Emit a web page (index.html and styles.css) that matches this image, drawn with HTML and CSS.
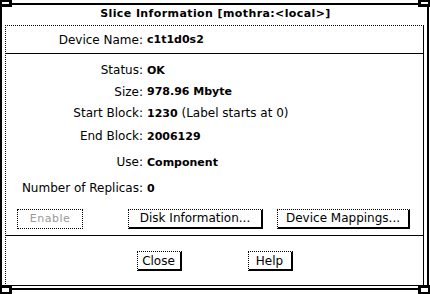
FILE: index.html
```html
<!DOCTYPE html>
<html lang="en">
<head>
  <meta charset="UTF-8" />
  <title>Slice Information</title>
  <link rel="stylesheet" href="styles.css">
</head>
<body>

  <div class="window">
    <span class="corner tl"></span>
    <span class="corner tr"></span>
    <span class="corner bl"></span>
    <span class="corner br"></span>

    <div class="title">Slice Information [mothra:&lt;local&gt;]</div>

    <div class="pane">
      <div class="device">
        <span class="label">Device Name:</span>
        <span class="value">c1t1d0s2</span>
      </div>

      <div class="info">
        <span class="label">Status:</span>
        <span class="value">OK</span>
        <span class="label">Size:</span>
        <span class="value">978.96 Mbyte</span>
        <span class="label">Start Block:</span>
        <span class="value">1230 <span class="note">(Label starts at 0)</span></span>
        <span class="label">End Block:</span>
        <span class="value">2006129</span>
        <span class="label">Use:</span>
        <span class="value">Component</span>
        <span class="label">Number of Replicas:</span>
        <span class="value">0</span>
      </div>

      <div class="actions">
        <button class="btn btn-enable" disabled>Enable</button>
        <button class="btn btn-disk">Disk Information...</button>
        <button class="btn btn-map">Device Mappings...</button>
      </div>

      <div class="footer">
        <button class="btn">Close</button>
        <button class="btn">Help</button>
      </div>
    </div>
  </div>

</body>
</html>
```

FILE: styles.css
```css
* {
  box-sizing: border-box;
  margin: 0;
  padding: 0;
}
body {
  background: white;
  font-family: 'DejaVu Sans', sans-serif;
  font-size: 12px;
  color: black;
  width: 430px;
  height: 294px;
  overflow: hidden;
}
.window {
  position: relative;
  margin: 3px 1px 0 0;
  height: 287px;
  border: 2px solid black;
  padding: 0 1px 0 3px;
}
.corner {
  position: absolute;
  background: white;
  border-style: solid;
  border-color: black;
}
.corner.tl { top: -5px; left: -2px; width: 12px; height: 7px; border-width: 2px 3px 3px 2px; }
.corner.tr { top: -5px; right: -3px; width: 12px; height: 7px; border-width: 2px 2px 3px 3px; }
.corner.bl { bottom: -6px; left: -2px; width: 12px; height: 9px; border-width: 3px 3px 2px 2px; }
.corner.br { bottom: -6px; right: -3px; width: 12px; height: 9px; border-width: 3px 2px 2px 3px; }

.title {
  height: 20px;
  text-align: center;
  font-weight: bold;
  font-size: 11px;
  line-height: 18px;
  letter-spacing: 0.4px;
}
.pane {
  height: 261px;
  border-top: 1px dotted black;
  border-left: 1px dotted black;
  border-right: 1px solid black;
  border-bottom: 1px solid black;
  margin-right: 2px;
}
.label {
  text-align: right;
}
.value {
  font-weight: bold;
  font-size: 11px;
}
.note {
  font-weight: normal;
  font-size: 12px;
}
.device {
  display: grid;
  grid-template-columns: 137px auto;
  column-gap: 4px;
  align-items: center;
  height: 28px;
  border-bottom: 1px solid black;
}
.info {
  display: grid;
  grid-template-columns: 137px auto;
  grid-template-rows: 20px 23px 19px 28px 24px 28px;
  column-gap: 4px;
  align-items: center;
  padding-top: 6px;
}
.actions {
  display: flex;
  align-items: center;
  height: 34px;
  padding: 0 0 0 11px;
  border-bottom: 1px solid black;
}
.btn {
  font-family: 'DejaVu Sans', sans-serif;
  font-size: 12px;
  height: 20px;
  background: white;
  color: black;
  border-top: 1px dotted black;
  border-left: 1px dotted black;
  border-right: 2px solid black;
  border-bottom: 2px solid black;
  padding: 0 4px;
}
.btn-enable {
  width: 66px;
  color: #999;
  font-size: 11px;
  letter-spacing: 0.5px;
  border-right: 1px dotted black;
  border-bottom: 1px dotted black;
}
.btn-disk {
  width: 135px;
  margin-left: 45px;
}
.btn-map {
  width: 133px;
  margin-left: 14px;
}
.footer {
  display: flex;
  justify-content: center;
  gap: 66px;
  padding-top: 15px;
}
.footer .btn {
  width: 45px;
  padding: 0;
}
```
